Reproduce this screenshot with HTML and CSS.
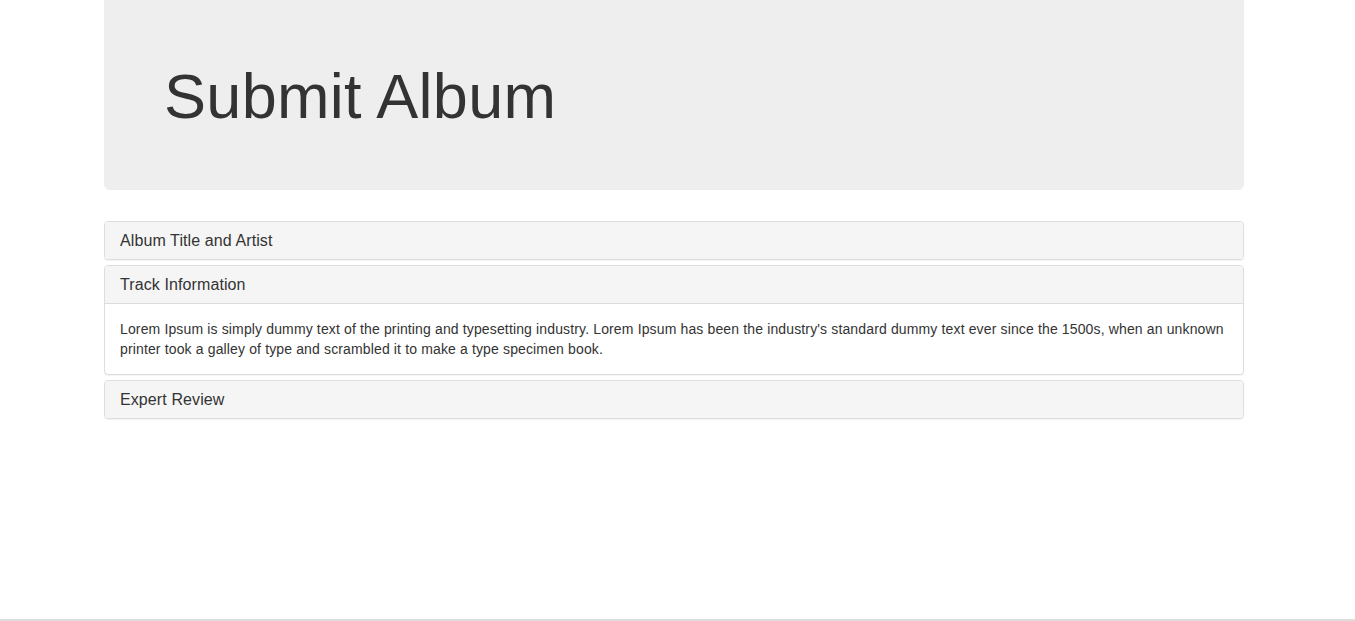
FILE: index.html
```html
<!DOCTYPE html>
<html lang="en">
<head>
<meta charset="utf-8">
<title>Submit Album</title>
<link rel="stylesheet" href="styles.css">
</head>
<body>
<div class="page">
  <main class="container">
    <div class="jumbotron">
      <h1>Submit Album</h1>
    </div>
    <div class="panel-group">
      <div class="panel">
        <div class="panel-heading">Album Title and Artist</div>
      </div>
      <div class="panel">
        <div class="panel-heading">Track Information</div>
        <div class="panel-body">Lorem Ipsum is simply dummy text of the printing and typesetting industry. Lorem Ipsum has been the industry's standard dummy text ever since the 1500s, when an unknown printer took a galley of type and scrambled it to make a type specimen book.</div>
      </div>
      <div class="panel">
        <div class="panel-heading">Expert Review</div>
      </div>
    </div>
  </main>
  <footer class="footer"></footer>
</div>
</body>
</html>
```

FILE: styles.css
```css
* { box-sizing: border-box; }
html, body { margin: 0; padding: 0; }
body {
  font-family: "Liberation Sans", Arial, sans-serif;
  font-size: 14px;
  line-height: 1.42857;
  color: #333;
  background: #fff;
}
.page {
  min-height: 100vh;
  display: flex;
  flex-direction: column;
}
.container {
  flex: 1;
  width: 1140px;
  margin-left: 104px;
}
.jumbotron {
  background: #eee;
  border-radius: 0 0 6px 6px;
  padding: 48px 60px;
  height: 190px;
}
.jumbotron h1 {
  margin: 14px 0 10px;
  font-size: 63px;
  font-weight: 500;
  line-height: 1.1;
  letter-spacing: 0.3px;
  color: #333;
}
.panel-group {
  margin-top: 31px;
  display: flex;
  flex-direction: column;
  gap: 5px;
}
.panel {
  border: 1px solid #ddd;
  border-radius: 4px;
  background: #fff;
  box-shadow: 0 1px 1px rgba(0,0,0,.05);
  overflow: hidden;
}
.panel-heading {
  background: #f5f5f5;
  padding: 10px 15px;
  font-size: 16px;
  line-height: 17px;
  letter-spacing: 0.1px;
  color: #333;
}
.panel-heading + .panel-body {
  border-top: 1px solid #ddd;
}
.panel-body {
  padding: 15px;
  font-size: 14px;
  line-height: 20px;
  letter-spacing: 0.14px;
}
.footer {
  height: 2px;
  border-top: 2px solid #dcdcdc;
}
```
